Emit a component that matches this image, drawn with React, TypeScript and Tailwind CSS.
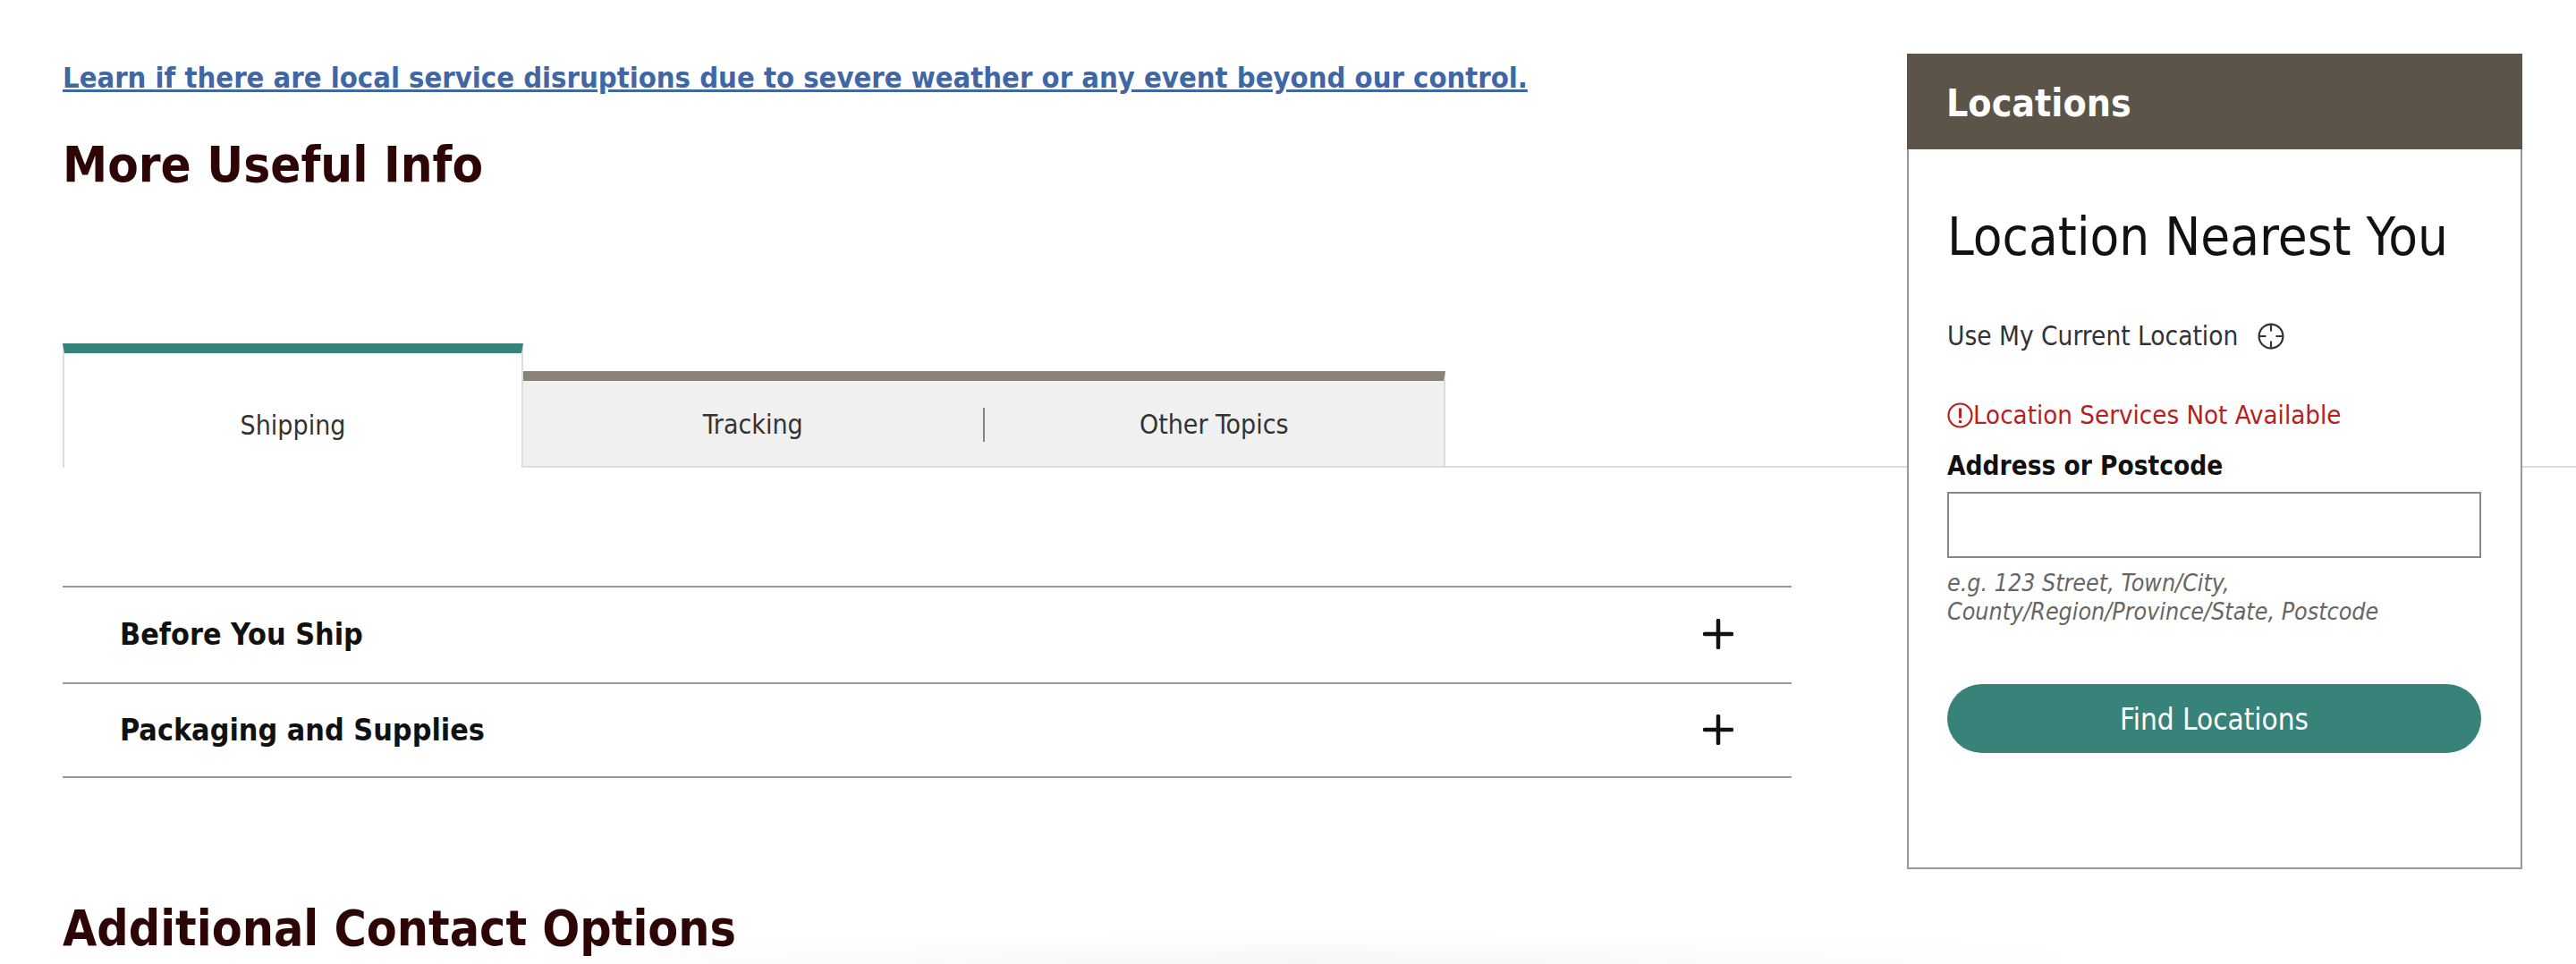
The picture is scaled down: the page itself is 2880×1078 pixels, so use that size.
const font = "font-['DejaVu_Sans_Condensed','DejaVu_Sans',sans-serif]";

function PlusIcon() {
  return (
    <svg width="34" height="34" viewBox="0 0 34 34" fill="none" stroke="#111" strokeWidth="4.5" strokeLinecap="round" className="-translate-y-[1px]">
      <path d="M17 2v30M2 17h30" />
    </svg>
  );
}

function LocateIcon() {
  return (
    <svg width="30" height="30" viewBox="0 0 30 30" fill="none" stroke="#333" strokeWidth="2.2" className="ml-[22px]">
      <circle cx="15" cy="15" r="13.4" />
      <path d="M15 1.5v8M15 20.5v8M1.5 15h8M20.5 15h8" />
    </svg>
  );
}

function AlertIcon() {
  return (
    <svg width="29" height="29" viewBox="0 0 29 29" fill="none" stroke="#b5211d" strokeWidth="2.2">
      <circle cx="14.5" cy="14.5" r="13" />
      <path d="M14.5 6.5v11" strokeWidth="3" />
      <path d="M14.5 20v3" strokeWidth="3" />
    </svg>
  );
}

function AccordionRow({ title, height }: { title: string; height: string }) {
  return (
    <div className={`flex items-center justify-between border-b-2 border-[#999] pl-[64px] pr-[65px] ${height}`}>
      <span className="text-[33.8px] leading-none font-bold text-[#111]">{title}</span>
      <PlusIcon />
    </div>
  );
}

export default function App() {
  return (
    <div className={`${font} relative flex h-[1078px] w-[2880px] overflow-hidden bg-white`}>
      {/* faint shadow along the bottom edge */}
      <div className="pointer-events-none absolute bottom-0 left-[560px] h-[34px] w-[1800px] bg-gradient-to-r from-white via-[#f6f6f6] to-white">
        <div className="h-full w-full bg-gradient-to-b from-white to-transparent" />
      </div>

      <main className="relative ml-[70px] w-[1933px] shrink-0">
        <a className="mt-[67px] block text-[32.5px] leading-[40px] font-bold text-[#3f66a5] underline whitespace-nowrap">
          Learn if there are local service disruptions due to severe weather or any event beyond our control.
        </a>
        <h2 className="mt-[39px] text-[56px] leading-[76px] font-bold text-[#2e0505] whitespace-nowrap">More Useful Info</h2>

        <div className="mt-[162px] flex h-[139px] w-[2810px] items-end border-b-2 border-[#ddd]">
          <div className="-mb-[2px] flex h-[139px] w-[515px] items-center justify-center border-x-2 border-t-[11px] border-x-[#ddd] border-t-[#34847a] bg-white pt-[32px] text-[30px] text-[#333]">
            Shipping
          </div>
          <div className="-mb-[2px] flex h-[108px] w-[1031px] items-center border-r-2 border-b-2 border-t-[11px] border-r-[#ddd] border-b-[#ddd] border-t-[#8a8177] bg-[#f0f0f0] pt-[2px] text-[30px] text-[#333]">
            <span className="flex-1 text-center">Tracking</span>
            <span className="h-[38px] w-[2px] bg-[#8a8177]" />
            <span className="flex-1 text-center">Other Topics</span>
          </div>
        </div>

        <div className="mt-[132px] border-t-2 border-[#999]">
          <AccordionRow title="Before You Ship" height="h-[108px]" />
          <AccordionRow title="Packaging and Supplies" height="h-[105px]" />
        </div>

        <h2 className="mt-[130px] text-[55px] leading-[76px] font-bold text-[#2e0505] whitespace-nowrap">Additional Contact Options</h2>
      </main>

      <aside className="relative z-10 ml-[129px] mt-[60px] h-[912px] w-[688px] shrink-0 border-2 border-t-0 border-[#999] bg-white">
        <div className="-mx-[2px] flex h-[107px] items-center bg-[#5c5349] pl-[44px] pt-[4px] text-[42.5px] font-bold text-white">Locations</div>
        <div className="px-[43px]">
          <h3 className="mt-[63px] text-[59.5px] leading-[70px] text-[#111] whitespace-nowrap">Location Nearest You</h3>
          <div className="mt-[58px] flex items-center text-[29.5px] leading-[36px] text-[#333]">
            Use My Current Location
            <LocateIcon />
          </div>
          <div className="mt-[52px] flex items-center text-[29.2px] leading-[36px] text-[#b5211d]">
            <AlertIcon />
            Location Services Not Available
          </div>
          <label className="mt-[19px] block text-[29.5px] leading-[40px] font-bold text-[#111]">Address or Postcode</label>
          <input className="mt-[9px] block h-[74px] w-[597px] border-2 border-[#888] bg-white" />
          <p className="mt-[12px] text-[26.6px] leading-[32px] italic text-[#666]">
            e.g. 123 Street, Town/City,
            <br />
            County/Region/Province/State, Postcode
          </p>
          <button className="mt-[65px] block h-[77px] w-[597px] rounded-full bg-[#37837a] pt-[2px] text-[33px] text-white">Find Locations</button>
        </div>
      </aside>
    </div>
  );
}
